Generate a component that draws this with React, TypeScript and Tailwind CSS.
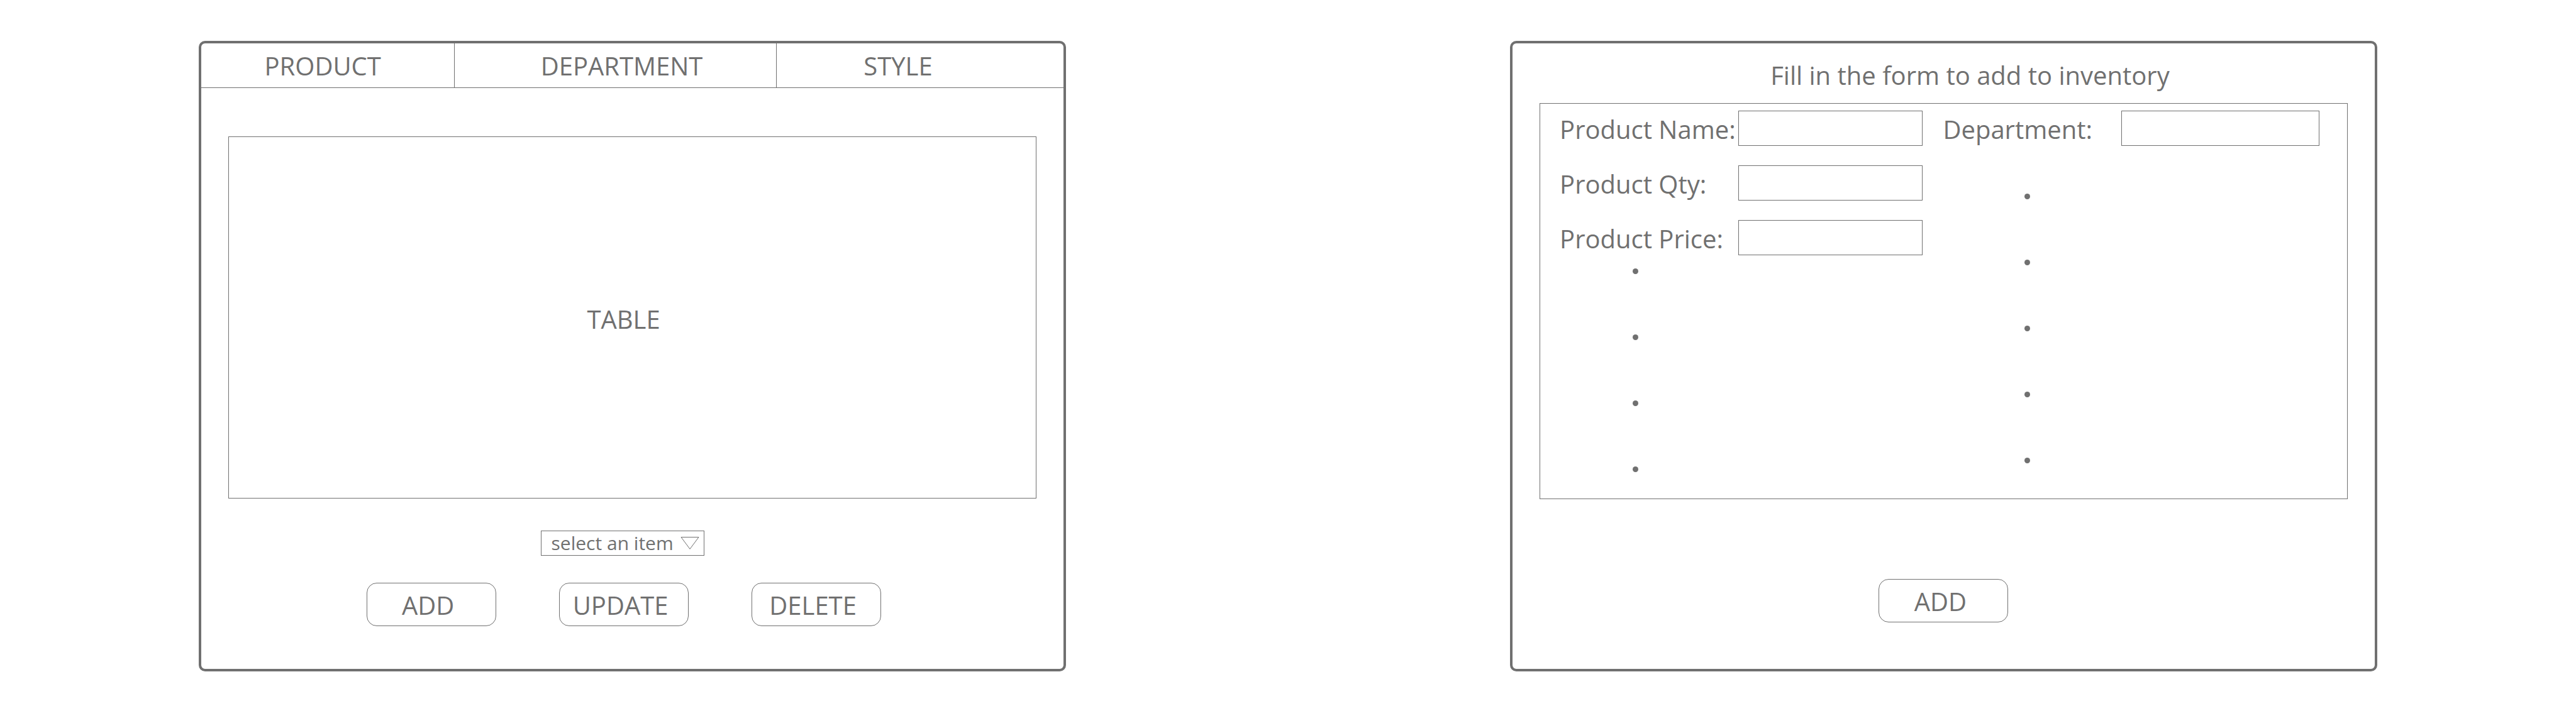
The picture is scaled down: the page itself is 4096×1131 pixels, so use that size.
import type { ReactNode } from "react";

function Panel({ children }: { children: ReactNode }) {
  return (
    <section className="flex min-w-0 flex-col rounded-[10px] border-4 border-[#707070]">
      {children}
    </section>
  );
}

function ActionButton({ children }: { children: ReactNode }) {
  return (
    <button
      type="button"
      className="h-[69px] w-[206px] rounded-2xl border border-[#707070] pt-0.5 pr-2.5 text-center"
    >
      {children}
    </button>
  );
}

function Field({ id, label }: { id: string; label: string }) {
  return (
    <div className="flex items-center">
      <label htmlFor={id} className="w-[284px] shrink-0 pt-1 whitespace-nowrap">
        {label}
      </label>
      <input
        id={id}
        type="text"
        className="h-14 w-full min-w-0 flex-1 border border-[#707070] px-3 outline-none"
      />
    </div>
  );
}

function Dots({ count, className }: { count: number; className: string }) {
  return (
    <ul className={`flex flex-col gap-24 ${className}`}>
      {Array.from({ length: count }, (_, i) => (
        <li key={i} className="size-[9px] rounded-full bg-[#707070]" />
      ))}
    </ul>
  );
}

function InventoryPanel() {
  return (
    <Panel>
      <nav className="grid h-[71px] grid-cols-[403fr_512fr_456fr] border-b border-[#707070]">
        <button type="button" className="border-r border-[#707070] pt-0.5 pr-4">
          PRODUCT
        </button>
        <button type="button" className="border-r border-[#707070] pt-0.5 pl-5">
          DEPARTMENT
        </button>
        <button type="button" className="pt-0.5 pr-[70px]">
          STYLE
        </button>
      </nav>
      <div className="mx-[43px] mt-[77px] flex h-[576px] items-center justify-center border border-[#707070] pt-1.5 pr-7">
        TABLE
      </div>
      <div className="mt-[51px] flex justify-center pr-8">
        <div className="relative">
          <select
            aria-label="select an item"
            className="block h-10 w-[260px] appearance-none border border-[#707070] bg-white pl-4 text-[30px] leading-[38px] outline-none"
          >
            <option>select an item</option>
          </select>
          <svg
            viewBox="0 0 30 20"
            className="pointer-events-none absolute top-2.5 right-2 h-5 w-[30px]"
            fill="none"
            stroke="#707070"
            strokeWidth="1"
            aria-hidden="true"
          >
            <path d="M1 .5H29L15 19.3Z" />
          </svg>
        </div>
      </div>
      <div className="mt-[43px] flex justify-center gap-[100px] pr-7 pb-[68px]">
        <ActionButton>ADD</ActionButton>
        <ActionButton>UPDATE</ActionButton>
        <ActionButton>DELETE</ActionButton>
      </div>
    </Panel>
  );
}

function AddProductPanel() {
  return (
    <Panel>
      <form className="flex flex-col">
        <h1 className="pt-[27px] pb-5 pl-[84px] text-center">
          Fill in the form to add to inventory
        </h1>
        <div className="mx-[43px] grid h-[630px] grid-cols-[minmax(0,578fr)_minmax(0,599fr)] gap-x-8 border border-[#707070] pt-[11px] pr-11 pl-[31px]">
          <div>
            <div className="flex flex-col gap-[31px]">
              <Field id="product-name" label="Product Name:" />
              <Field id="product-qty" label="Product Qty:" />
              <Field id="product-price" label="Product Price:" />
            </div>
            <Dots count={4} className="mt-[21px] ml-[116px]" />
          </div>
          <div>
            <Field id="department" label="Department:" />
            <Dots count={5} className="mt-[76px] ml-[130px]" />
          </div>
        </div>
        <div className="mt-[127px] flex justify-center pb-[74px]">
          <ActionButton>ADD</ActionButton>
        </div>
      </form>
    </Panel>
  );
}

export default function App() {
  return (
    <main className="grid min-h-screen grid-cols-2 items-start gap-x-[17.24vw] bg-white px-[7.72vw] pt-[65px] pb-[63px] font-['Open_Sans',sans-serif] text-[40px] leading-[48px] text-[#707070]">
      <InventoryPanel />
      <AddProductPanel />
    </main>
  );
}
